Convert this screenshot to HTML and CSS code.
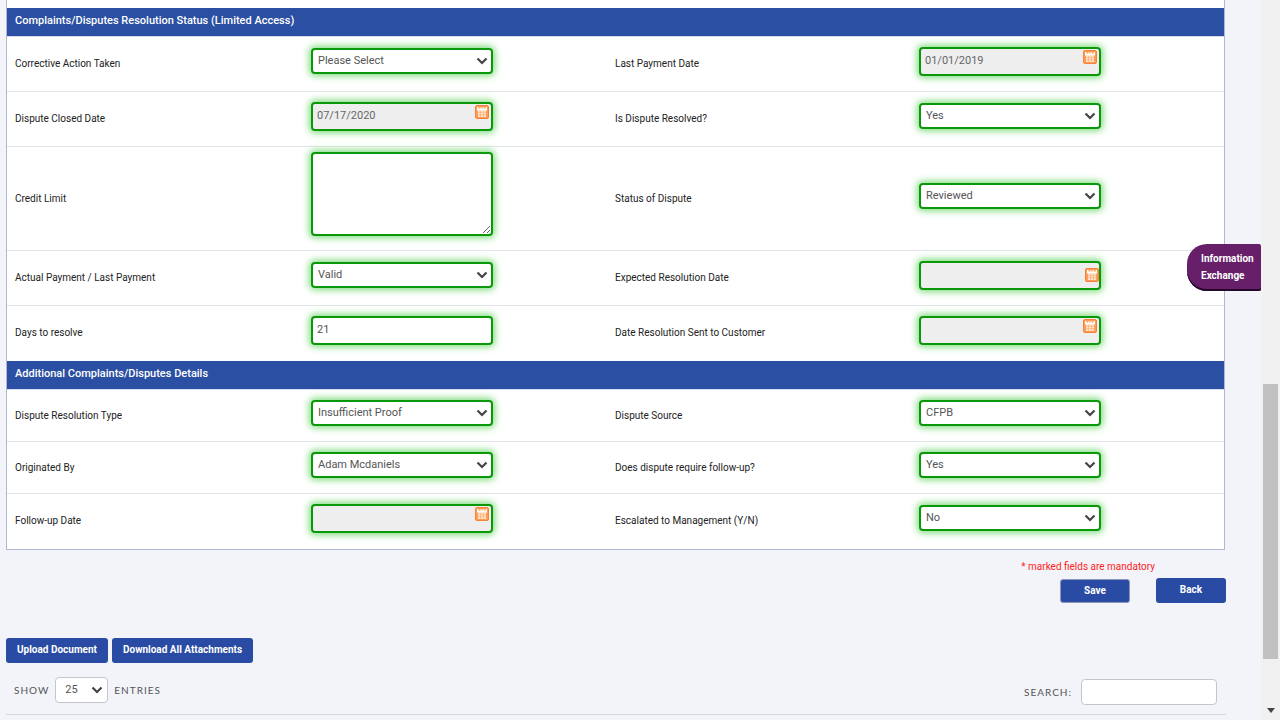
FILE: index.html
```html
<!DOCTYPE html>
<html lang="en">
<head>
<meta charset="utf-8">
<title>Complaints/Disputes Resolution</title>
<link rel="stylesheet" href="styles.css">
</head>
<body>
<svg class="sprite" aria-hidden="true">
  <symbol id="chevron" viewBox="0 0 12 8"><path d="M1.500 1.500 6 6l4.500-4.500" fill="none" stroke="#444" stroke-width="2.200"/></symbol>
  <symbol id="calendar" viewBox="0 0 14 14">
    <rect x=".5" y=".5" width="13" height="13" rx="1.500" fill="#ff9c55" stroke="#f58238"/>
    <path d="M2 2h1.500v1.500h2V2h1v1.500h1.200V2h1v1.500h2V2H12v3.500H2z" fill="#fff"/>
    <path d="M3 5h8v7H3z" fill="#ffe6d0"/>
    <path d="M3 7.300h8M3 9.700h8M5.500 6v6M8.500 6v6" stroke="#ffb27a" stroke-width=".8"/>
  </symbol>
</svg>
<div class="page">
  <main class="content">
    <form class="form">
      <section class="panel">
        <h2 class="panel-title">Complaints/Disputes Resolution Status (Limited Access)</h2>
        <div class="row">
          <label for="action">Corrective Action Taken</label>
          <div class="field"><select id="action"><option>Please Select</option></select><svg class="chevron"><use href="#chevron"/></svg></div>
          <label for="lastpay">Last Payment Date</label>
          <div class="field"><input class="date" id="lastpay" type="text" value="01/01/2019" readonly><button class="cal" type="button" aria-label="Choose date"><svg><use href="#calendar"/></svg></button></div>
        </div>
        <div class="row">
          <label for="closed">Dispute Closed Date</label>
          <div class="field"><input class="date" id="closed" type="text" value="07/17/2020" readonly><button class="cal" type="button" aria-label="Choose date"><svg><use href="#calendar"/></svg></button></div>
          <label for="resolved">Is Dispute Resolved?</label>
          <div class="field"><select id="resolved"><option>Yes</option></select><svg class="chevron"><use href="#chevron"/></svg></div>
        </div>
        <div class="row">
          <label for="limit">Credit Limit</label>
          <div class="field field-area"><textarea id="limit"></textarea></div>
          <label for="status">Status of Dispute</label>
          <div class="field"><select id="status"><option>Reviewed</option></select><svg class="chevron"><use href="#chevron"/></svg></div>
        </div>
        <div class="row">
          <label for="actual">Actual Payment / Last Payment</label>
          <div class="field"><select id="actual"><option>Valid</option></select><svg class="chevron"><use href="#chevron"/></svg></div>
          <label for="expected">Expected Resolution Date</label>
          <div class="field"><input class="date" id="expected" type="text" readonly><button class="cal cal-middle" type="button" aria-label="Choose date"><svg><use href="#calendar"/></svg></button></div>
        </div>
        <div class="row">
          <label for="days">Days to resolve</label>
          <div class="field"><input id="days" type="text" value="21"></div>
          <label for="sent">Date Resolution Sent to Customer</label>
          <div class="field"><input class="date" id="sent" type="text" readonly><button class="cal" type="button" aria-label="Choose date"><svg><use href="#calendar"/></svg></button></div>
        </div>
        <h2 class="panel-title">Additional Complaints/Disputes Details</h2>
        <div class="row row-short">
          <label for="type">Dispute Resolution Type</label>
          <div class="field"><select id="type"><option>Insufficient Proof</option></select><svg class="chevron"><use href="#chevron"/></svg></div>
          <label for="source">Dispute Source</label>
          <div class="field"><select id="source"><option>CFPB</option></select><svg class="chevron"><use href="#chevron"/></svg></div>
        </div>
        <div class="row row-short">
          <label for="by">Originated By</label>
          <div class="field"><select id="by"><option>Adam Mcdaniels</option></select><svg class="chevron"><use href="#chevron"/></svg></div>
          <label for="follow">Does dispute require follow-up?</label>
          <div class="field"><select id="follow"><option>Yes</option></select><svg class="chevron"><use href="#chevron"/></svg></div>
        </div>
        <div class="row">
          <label for="followdate">Follow-up Date</label>
          <div class="field"><input class="date" id="followdate" type="text" readonly><button class="cal" type="button" aria-label="Choose date"><svg><use href="#calendar"/></svg></button></div>
          <label for="esc">Escalated to Management (Y/N)</label>
          <div class="field"><select id="esc"><option>No</option></select><svg class="chevron"><use href="#chevron"/></svg></div>
        </div>
      </section>
      <p class="note">* marked fields are mandatory</p>
      <div class="actions">
        <button class="btn btn-save" type="button">Save</button>
        <button class="btn btn-back" type="button">Back</button>
      </div>
    </form>
    <div class="uploads">
      <button class="btn" type="button">Upload Document</button>
      <button class="btn" type="button">Download All Attachments</button>
    </div>
    <div class="listbar">
      <div class="length">
        <label for="len">SHOW</label>
        <span class="pick"><select id="len"><option>25</option></select><svg class="chevron"><use href="#chevron"/></svg></span>
        <span>ENTRIES</span>
      </div>
      <div class="search">
        <label for="search">SEARCH:</label>
        <input id="search" type="text">
      </div>
    </div>
    <button class="exchange" type="button">Information Exchange</button>
  </main>
  <div class="scrollbar" aria-hidden="true">
    <div class="thumb"></div>
    <svg class="down" viewBox="0 0 8 5"><path d="M0 0h8L4 5z" fill="#444"/></svg>
  </div>
</div>
</body>
</html>
```
FILE: styles.css
```css
* { box-sizing: border-box; }

body {
  margin: 0;
  background: #f2f4f9;
  color: #222;
  font: 10px/16px Roboto, "Liberation Sans", sans-serif;
}

.sprite { position: absolute; width: 0; height: 0; }

.page { display: flex; height: 100vh; overflow: hidden; }

.content { position: relative; flex: 1; padding: 0 35px 0 6px; }

.panel {
  margin-right: 1px;
  padding-top: 8px;
  background: #fff;
  border: 1px solid #b0b7d2;
  border-top: 0;
}

.panel-title {
  margin: 0;
  padding: 5px 8px 7px;
  background: #2b4fa2;
  border-bottom: 1px solid #d5dcee;
  color: #fff;
  font-size: 11px;
  font-weight: 500;
  line-height: 16px;
}

.row {
  display: grid;
  grid-template-columns: 296fr 304fr 304fr 313fr;
  align-items: center;
  min-height: 55px;
  padding: 5px 0;
  border-bottom: 1px solid #e1e4e8;
}

.row-short { min-height: 52px; }
.row:last-child, .row:has(+ .panel-title) { border-bottom-color: transparent; }

.row > label { padding: 0 8px; }

.field {
  position: relative;
  width: 182px;
  margin: 0 0 6px 8px;
}

.field select, .field input, .field textarea {
  display: block;
  width: 100%;
  margin: 0;
  border: 2px solid #0a980a;
  border-radius: 4px;
  box-shadow: 0 0 7px 2px #7fdc7f;
  background: #fff;
  color: #555;
  font: 11px/16px Roboto, "Liberation Sans", sans-serif;
  outline: 0;
}

.field select { height: 26px; padding: 0 20px 0 5px; appearance: none; }
.field input { height: 29px; padding: 0 20px 2px 4px; }
.field .date { background: #eee; color: #666; }
.field textarea { height: 84px; resize: vertical; }
.field-area { margin-bottom: 9px; }

.chevron {
  position: absolute;
  top: 9px;
  right: 5px;
  width: 12px;
  height: 8px;
  pointer-events: none;
}

.cal {
  position: absolute;
  top: 3px;
  right: 4px;
  width: 14px;
  height: 14px;
  padding: 0;
  border: 0;
  background: none;
}

.cal svg { display: block; width: 14px; height: 14px; }
.cal-middle { top: 7px; right: 2px; }

.note { margin: 9px 71px 3px 0; color: #f22; text-align: right; }

.actions { display: flex; justify-content: flex-end; align-items: center; gap: 26px; }

.btn {
  height: 25px;
  padding: 0 11px 2px;
  border: 0;
  border-radius: 3px;
  background: #294ba3;
  color: #fff;
  font: 700 10px/16px Roboto, "Liberation Sans", sans-serif;
}

.btn-save, .btn-back { width: 70px; }
.btn-save { height: 24px; padding-bottom: 0; border: 1px solid #8d96b8; }

.uploads { display: flex; gap: 4px; margin-top: 35px; }

.listbar {
  display: flex;
  justify-content: space-between;
  padding: 14px 9px 9px 8px;
  border-bottom: 1px solid #d5d9de;
  color: #555;
  font-family: Lato, sans-serif;
  letter-spacing: 1px;
}

.length { display: flex; align-items: center; gap: 6px; height: 26px; }
.search { display: flex; align-items: center; gap: 9px; margin-top: 2px; }
.pick { position: relative; }

.pick select, .search input {
  display: block;
  height: 26px;
  border: 1px solid #c3c6cb;
  border-radius: 4px;
  background: #fff;
  color: #555;
  font: 11px/16px Roboto, sans-serif;
}

.pick select { width: 53px; padding: 0 9px; appearance: none; }
.search input { width: 136px; }

.exchange {
  position: absolute;
  top: 244px;
  right: 0;
  width: 74px;
  padding: 6px 0 7px 14px;
  border: 0;
  border-radius: 20px 2px 2px 20px;
  background: #661f68;
  box-shadow: inset 0 -2px 0 #24082a;
  color: #fff;
  font: 700 10px/17px Roboto, sans-serif;
  text-align: left;
}

.scrollbar {
  display: grid;
  grid-template-rows: 384fr 275fr 61fr;
  justify-items: center;
  width: 19px;
  background: #f1f1f1;
}

.thumb { grid-row: 2; width: 15px; background: #c1c1c1; }
.down { grid-row: 3; align-self: end; width: 8px; height: 5px; margin-bottom: 7px; }
```
